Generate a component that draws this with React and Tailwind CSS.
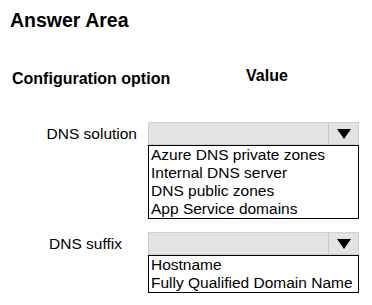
import React from "react";

const Dropdown = ({ options }) => (
  <div className="w-[211px]">
    <div className="flex h-[23px] border border-[#d0d0d0] bg-[#e3e3e3]">
      <div className="flex-1 border-r border-[#c8c8c8]" />
      <div className="flex w-[29px] items-center justify-center">
        <svg width="16" height="12" viewBox="0 0 16 12">
          <polygon points="1,1 15,1 8,11" fill="#000" />
        </svg>
      </div>
    </div>
    <div className="border border-black bg-white px-[2px] text-[15.5px] leading-[18px] text-black">
      {options.map((o) => (
        <div key={o}>{o}</div>
      ))}
    </div>
  </div>
);

export default function App() {
  return (
    <div className="h-[305px] w-[372px] bg-white font-['Liberation_Sans',Arial,sans-serif] text-black">
      <div className="px-[10px] pt-[6px] text-[19.5px] font-bold">Answer Area</div>
      <div className="mt-[29px] flex text-[16px] font-bold">
        <div className="w-[246px] pl-[12px] pt-[3px]">Configuration option</div>
        <div>Value</div>
      </div>
      <div className="mt-[31px] flex">
        <div className="w-[148px] pr-[11px] text-right text-[15.5px]">DNS solution</div>
        <Dropdown
          options={[
            "Azure DNS private zones",
            "Internal DNS server",
            "DNS public zones",
            "App Service domains",
          ]}
        />
      </div>
      <div className="mt-[13px] flex">
        <div className="w-[148px] pr-[26px] text-right text-[15.5px]">DNS suffix</div>
        <Dropdown options={["Hostname", "Fully Qualified Domain Name"]} />
      </div>
    </div>
  );
}
